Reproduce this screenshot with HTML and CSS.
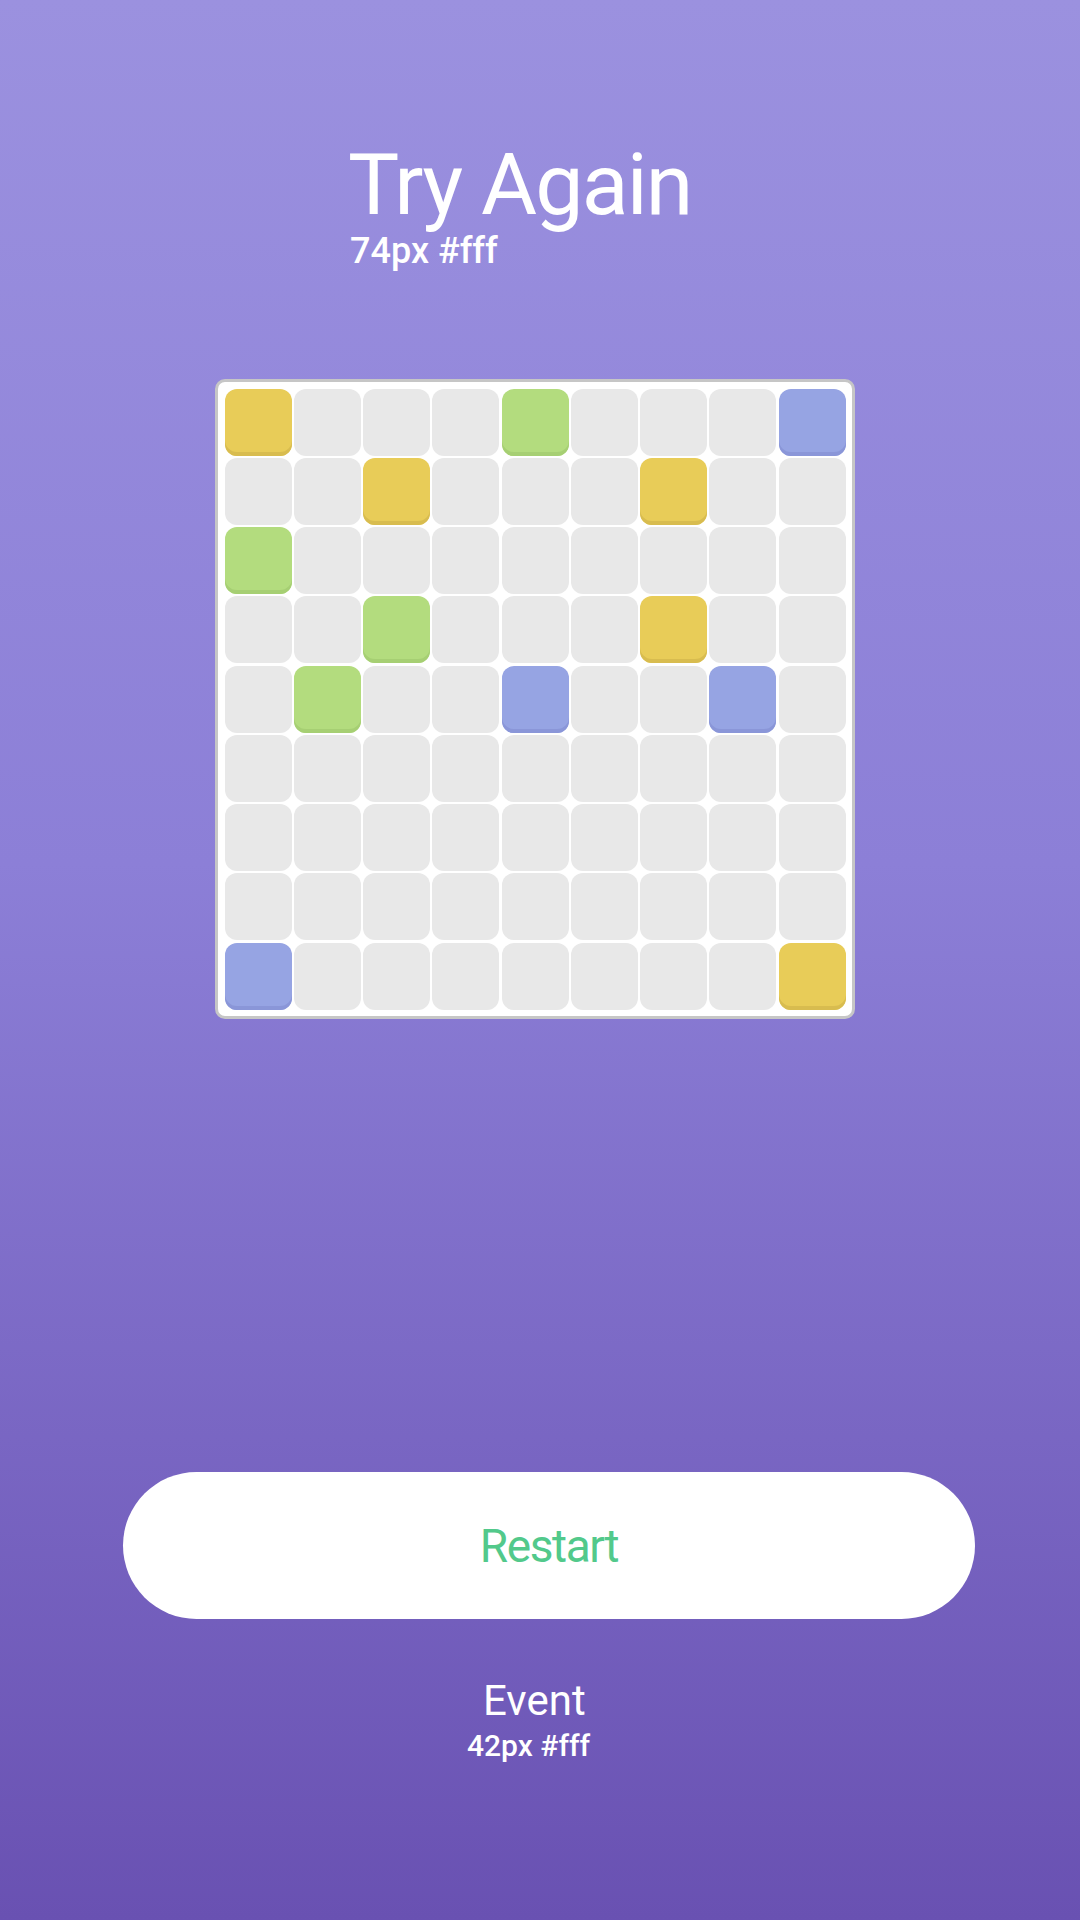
FILE: index.html
```html
<!DOCTYPE html>
<html lang="en">
<head>
<meta charset="utf-8">
<title>Try Again</title>
<link rel="stylesheet" href="styles.css">
</head>
<body>
<div class="page">
  <header class="heading">
    <h1 class="title">Try Again</h1>
    <div class="title-sub">74px #fff</div>
  </header>

  <div class="board">
    <div class="grid">
      <div class="cell yellow"></div><div class="cell"></div><div class="cell"></div><div class="cell"></div><div class="cell green"></div><div class="cell"></div><div class="cell"></div><div class="cell"></div><div class="cell blue"></div>
      <div class="cell"></div><div class="cell"></div><div class="cell yellow"></div><div class="cell"></div><div class="cell"></div><div class="cell"></div><div class="cell yellow"></div><div class="cell"></div><div class="cell"></div>
      <div class="cell green"></div><div class="cell"></div><div class="cell"></div><div class="cell"></div><div class="cell"></div><div class="cell"></div><div class="cell"></div><div class="cell"></div><div class="cell"></div>
      <div class="cell"></div><div class="cell"></div><div class="cell green"></div><div class="cell"></div><div class="cell"></div><div class="cell"></div><div class="cell yellow"></div><div class="cell"></div><div class="cell"></div>
      <div class="cell"></div><div class="cell green"></div><div class="cell"></div><div class="cell"></div><div class="cell blue"></div><div class="cell"></div><div class="cell"></div><div class="cell blue"></div><div class="cell"></div>
      <div class="cell"></div><div class="cell"></div><div class="cell"></div><div class="cell"></div><div class="cell"></div><div class="cell"></div><div class="cell"></div><div class="cell"></div><div class="cell"></div>
      <div class="cell"></div><div class="cell"></div><div class="cell"></div><div class="cell"></div><div class="cell"></div><div class="cell"></div><div class="cell"></div><div class="cell"></div><div class="cell"></div>
      <div class="cell"></div><div class="cell"></div><div class="cell"></div><div class="cell"></div><div class="cell"></div><div class="cell"></div><div class="cell"></div><div class="cell"></div><div class="cell"></div>
      <div class="cell blue"></div><div class="cell"></div><div class="cell"></div><div class="cell"></div><div class="cell"></div><div class="cell"></div><div class="cell"></div><div class="cell"></div><div class="cell yellow"></div>
    </div>
  </div>

  <button class="restart" type="button">Restart</button>

  <footer class="event">
    <div class="event-title">Event</div>
    <div class="event-sub">42px #fff</div>
  </footer>
</div>
</body>
</html>
```

FILE: styles.css
```css
* {
  box-sizing: border-box;
}

html, body {
  margin: 0;
  padding: 0;
}

body {
  width: 1080px;
  height: 1920px;
  overflow: hidden;
  font-family: Roboto, "Liberation Sans", sans-serif;
  color: #fff;
  background: linear-gradient(180deg, #9b91df 0%, #8c7fd7 45%, #6951b2 100%);
}

.page {
  display: flex;
  flex-direction: column;
  align-items: flex-start;
  height: 1920px;
}

.heading {
  margin-top: 142px;
  margin-left: 348px;
}

.title {
  margin: 0;
  font-size: 86px;
  line-height: 86px;
  font-weight: 400;
  letter-spacing: -1.8px;
  color: #fff;
}

.title-sub {
  margin-top: 5px;
  margin-left: 2px;
  font-size: 36px;
  line-height: 36px;
  font-weight: 500;
}

.board {
  margin-top: 110px;
  margin-left: 215px;
  width: 640px;
  height: 640px;
  padding: 6.5px;
  background: #fff;
  border: 3px solid #c6c6c6;
  border-radius: 10px;
}

.grid {
  display: grid;
  grid-template-columns: repeat(9, 1fr);
  grid-template-rows: repeat(9, 1fr);
  gap: 2.25px;
  width: 100%;
  height: 100%;
}

.cell {
  border-radius: 12px;
  background: #e8e8e8;
}

.yellow {
  background: #e8cc58;
  box-shadow: inset 0 -4px 0 #d8bc4f;
}

.green {
  background: #b3dc7e;
  box-shadow: inset 0 -4px 0 #a6cf73;
}

.blue {
  background: #96a4e3;
  box-shadow: inset 0 -4px 0 #8a96d8;
}

.restart {
  margin-top: 453px;
  margin-left: 123px;
  width: 852px;
  height: 147px;
  border: none;
  border-radius: 74px;
  background: #fff;
  color: #52c98b;
  font-family: Roboto, "Liberation Sans", sans-serif;
  font-size: 46px;
  font-weight: 400;
  letter-spacing: -1.4px;
  padding: 0;
  cursor: pointer;
}

.event {
  margin-top: 61px;
  margin-left: 467px;
}

.event-title {
  padding-left: 16px;
  font-size: 42px;
  line-height: 42px;
  font-weight: 400;
}

.event-sub {
  margin-top: 9px;
  font-size: 30px;
  line-height: 30px;
  font-weight: 500;
}
```
